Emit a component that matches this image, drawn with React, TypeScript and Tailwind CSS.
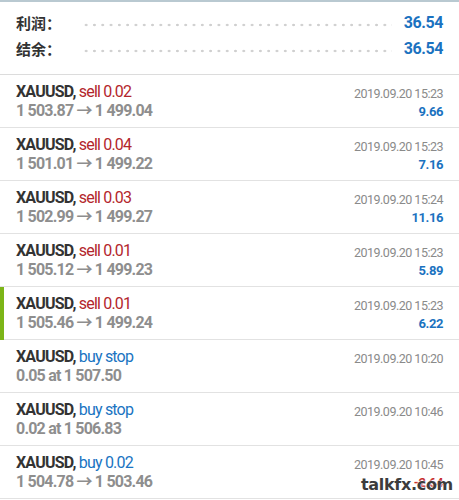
const summary = [
  { label: "利润：", value: "36.54" },
  { label: "结余：", value: "36.54" },
]

type Trade = {
  action: string
  kind: "sell" | "buy"
  detail: string
  time: string
  profit: string
  active?: boolean
}

const trades: Trade[] = [
  { action: "sell 0.02", kind: "sell", detail: "1 503.87 → 1 499.04", time: "2019.09.20 15:23", profit: "9.66" },
  { action: "sell 0.04", kind: "sell", detail: "1 501.01 → 1 499.22", time: "2019.09.20 15:23", profit: "7.16" },
  { action: "sell 0.03", kind: "sell", detail: "1 502.99 → 1 499.27", time: "2019.09.20 15:24", profit: "11.16" },
  { action: "sell 0.01", kind: "sell", detail: "1 505.12 → 1 499.23", time: "2019.09.20 15:23", profit: "5.89" },
  { action: "sell 0.01", kind: "sell", detail: "1 505.46 → 1 499.24", time: "2019.09.20 15:23", profit: "6.22", active: true },
  { action: "buy stop", kind: "buy", detail: "0.05 at 1 507.50", time: "2019.09.20 10:20", profit: "" },
  { action: "buy stop", kind: "buy", detail: "0.02 at 1 506.83", time: "2019.09.20 10:46", profit: "" },
  { action: "buy 0.02", kind: "buy", detail: "1 504.78 → 1 503.46", time: "2019.09.20 10:45", profit: "-2.64" },
]

export default function App() {
  return (
    <div className="relative w-[459px] h-[500px] overflow-hidden bg-white font-['Roboto','Noto_Sans_CJK_SC',sans-serif]">
      <div className="h-[2px] bg-[#b9c9d1]" />

      {/* account summary */}
      <div className="pt-[8px] pb-[12px] border-b border-[#dcdcdc]">
        {summary.map((row) => (
          <div key={row.label} className="flex items-center h-[26px] pl-4 pr-4">
            <span className="w-[66px] text-[15px] font-bold text-[#333] font-['Noto_Sans_CJK_SC',sans-serif]">
              {row.label}
            </span>
            <div className="flex-1 h-[4px] mt-[4px] mr-[12px] bg-[radial-gradient(circle,#cfcfcf_1px,transparent_1.6px)] bg-[length:8.3px_4px]" />
            <span className="text-[16px] font-bold text-[#1b72c0] tracking-[-0.4px]">{row.value}</span>
          </div>
        ))}
      </div>

      {/* trades */}
      <div>
        {trades.map((t, i) => (
          <div key={i} className="relative flex justify-between h-[53px] border-b border-[#e2e2e2] pl-4 pr-4">
            {t.active && <div className="absolute left-0 top-0 bottom-[-1px] w-[4px] bg-[#7cb518]" />}
            <div className="pt-[7px]">
              <div className="text-[16px] leading-[19px] tracking-[-0.8px]">
                <span className="font-bold text-[#333]">XAUUSD, </span>
                <span className={t.kind === "sell" ? "text-[#b3262c]" : "text-[#1a74c2]"}>{t.action}</span>
              </div>
              <div className="text-[16px] leading-[19px] font-bold text-[#8e8e8e] tracking-[-0.8px]">{t.detail}</div>
            </div>
            <div className="pt-[10px] flex flex-col items-end">
              <div className="text-[12.5px] leading-[17px] text-[#8a8a8a] tracking-[-0.5px]">{t.time}</div>
              <div
                className={`mt-[1px] text-[13px] leading-[18px] font-bold tracking-[-0.4px] ${
                  t.profit.startsWith("-") ? "text-[#c62828]" : "text-[#1b72c0]"
                }`}
              >
                {t.profit}
              </div>
            </div>
          </div>
        ))}
      </div>

      {/* watermark */}
      <div className="absolute right-[6px] bottom-[3px] text-[16px] font-bold text-[#3c3c3c] tracking-[-0.3px] font-['DejaVu_Sans',sans-serif] [text-shadow:0_0_2px_#fff,0_0_2px_#fff]">
        talkfx.com
      </div>
    </div>
  )
}
